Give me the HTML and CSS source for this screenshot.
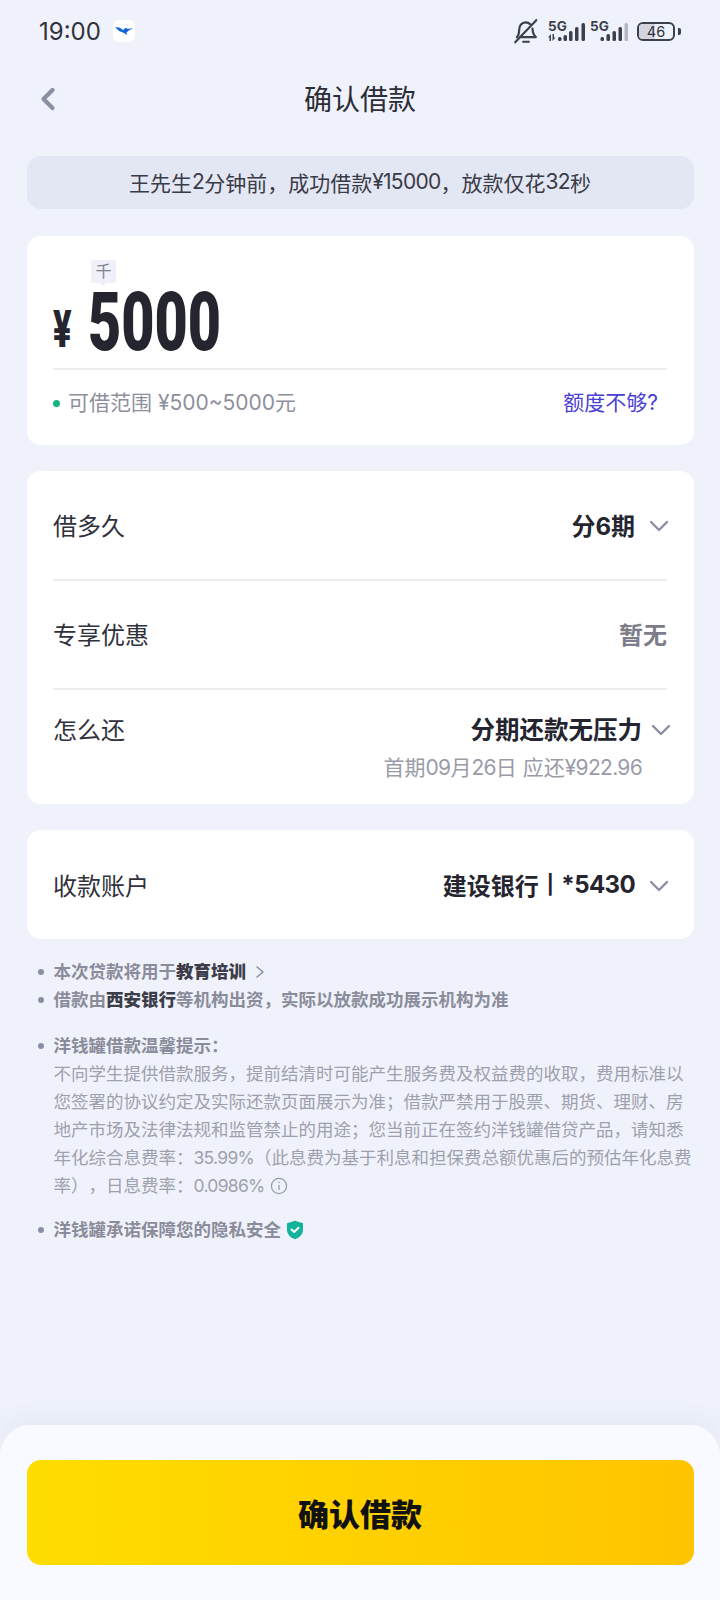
FILE: index.html
```html
<!doctype html>
<html lang="zh-CN">
<head>
<meta charset="utf-8">
<meta name="viewport" content="width=device-width, initial-scale=1.0">
<link rel="stylesheet" href="styles.css">
<title>确认借款</title>
</head>
<body>
<main class="page">
  <div class="status">
    <div class="status-left">
      <span class="time">19:00</span>
      <span class="app-badge">
        <svg width="20" height="12" viewBox="0 0 20 12"><path d="M1 2l5 .8 3 2.200 2-1.700 1.500-.3 1.300 1L19 3l-4.500 2.800-2 1.700.5 2.500-3.500-2.300L5 6z" fill="#1463d8"/></svg>
      </span>
    </div>
    <div class="status-right">
      <svg class="bell" width="24" height="25" viewBox="2 1 21 22" fill="none" stroke="#3c3f4c" stroke-width="1.900" stroke-linecap="round" stroke-linejoin="round"><path d="M4.500 17c1.500-1.500 2-3.500 2-6.500 0-3.600 2.200-6.500 5.700-6.500 1.700 0 3 .6 4 1.700"/><path d="M18.200 9.500c.2 3 .5 5.500 3 7.500H8"/><path d="M3 21.500L21.500 2"/><path d="M10 21h5"/></svg>
      <span class="net">
        <span class="net-label">5G</span>
        <svg width="38" height="21" viewBox="0 0 38 21" fill="#3c3f4c"><path d="M0 16.500L3 13v7H1.500v-3.500zM4.500 13H6v3.500h1.500L4.500 20z"/><rect x="10" y="16" width="3.500" height="4" rx="1.500"/><rect x="15.500" y="14" width="3.500" height="6" rx="1.500"/><rect x="21" y="10" width="3.500" height="10" rx="1.500"/><rect x="27" y="6" width="3.500" height="14" rx="1.500"/><rect x="33.500" y="2" width="3.500" height="18" rx="1.500"/></svg>
      </span>
      <span class="net">
        <span class="net-label">5G</span>
        <svg width="38" height="21" viewBox="0 0 38 21" fill="#3c3f4c"><rect x="10.500" y="16" width="3.500" height="4" rx="1.500"/><rect x="16.500" y="13" width="3.500" height="7" rx="1.500"/><rect x="22.500" y="10" width="3.500" height="10" rx="1.500"/><rect x="28.500" y="6" width="3.500" height="14" rx="1.500"/><rect x="34.500" y="2" width="3.500" height="18" rx="1.500" fill="#b5b7c0"/></svg>
      </span>
      <span class="battery"><span class="battery-level"></span><span class="battery-num">46</span></span>
      <span class="battery-cap"></span>
    </div>
  </div>

  <header class="nav">
    <svg class="nav-back" width="16" height="24" viewBox="0 0 16 24" fill="none" stroke="#8b8ea3" stroke-width="4.200" stroke-linejoin="round" stroke-linecap="round"><path d="M12.500 3L3.500 12l9 9"/></svg>
    <h1 class="nav-title">确认借款</h1>
  </header>

  <div class="notice">王先生<span class="num">2</span>分钟前，成功借款<span class="num">¥15000</span>，放款仅花<span class="num">32</span>秒</div>

  <section class="card amount-card">
    <div class="amount-hint">千</div>
    <div class="amount">
      <span class="yen">¥</span>
      <span class="amount-num">5000</span>
    </div>
    <div class="range">
      <span class="range-text"><i class="dot"></i>可借范围 ¥500~5000元</span>
      <span class="range-link">额度不够?</span>
    </div>
  </section>

  <section class="card rows">
    <div class="row row-first">
      <span class="row-label">借多久</span>
      <span class="row-value">分6期<svg class="chev" width="20" height="12" viewBox="0 0 20 12" fill="none" stroke="#8b8ea3" stroke-width="2.400" stroke-linecap="round" stroke-linejoin="round"><path d="M2 2l8 8 8-8"/></svg></span>
    </div>
    <div class="row row-second">
      <span class="row-label">专享优惠</span>
      <span class="row-value row-muted">暂无</span>
    </div>
    <div class="row row-third">
      <div class="row-top">
        <span class="row-label">怎么还</span>
        <span class="row-value row-wide">分期还款无压力<svg class="chev chev-tight" width="20" height="12" viewBox="0 0 20 12" fill="none" stroke="#8b8ea3" stroke-width="2.400" stroke-linecap="round" stroke-linejoin="round"><path d="M2 2l8 8 8-8"/></svg></span>
      </div>
      <div class="row-sub">首期<span class="num">09</span>月<span class="num">26</span>日 应还<span class="num">¥922.96</span></div>
    </div>
  </section>

  <section class="card account">
    <span class="row-label">收款账户</span>
    <span class="row-value">建设银行<span class="bank-no"><span class="bank-sep">|</span>*5430</span><svg class="chev" width="20" height="12" viewBox="0 0 20 12" fill="none" stroke="#8b8ea3" stroke-width="2.400" stroke-linecap="round" stroke-linejoin="round"><path d="M2 2l8 8 8-8"/></svg></span>
  </section>

  <section class="notes">
    <p class="note note-strong">本次贷款将用于<b>教育培训</b><svg class="note-arrow" width="10" height="14" viewBox="0 0 10 14" fill="none" stroke="#8b8ea3" stroke-width="1.600" stroke-linecap="round" stroke-linejoin="round"><path d="M2 2l6 5-6 5"/></svg></p>
    <p class="note note-strong">借款由<b>西安银行</b>等机构出资，实际以放款成功展示机构为准</p>
    <p class="note note-strong note-gap">洋钱罐借款温馨提示：</p>
    <div class="note-body">
      <p>不向学生提供借款服务，提前结清时可能产生服务费及权益费的收取，费用标准以</p>
      <p>您签署的协议约定及实际还款页面展示为准；借款严禁用于股票、期货、理财、房</p>
      <p>地产市场及法律法规和监管禁止的用途；您当前正在签约洋钱罐借贷产品，请知悉</p>
      <p>年化综合息费率：<span class="num">35.99%</span>（此息费为基于利息和担保费总额优惠后的预估年化息费</p>
      <p>率），日息费率：<span class="num">0.0986%</span><svg class="info" width="18" height="18" viewBox="0 0 18 18" fill="none" stroke="#9a9dad" stroke-width="1.300"><circle cx="9" cy="9" r="7.600"/><path d="M9 8v5M9 4.800v1.300"/></svg></p>
    </div>
    <p class="note note-strong note-last">洋钱罐承诺保障您的隐私安全<svg class="shield" width="18" height="20" viewBox="0 0 18 20"><path d="M9 .8l8 2.400v6.300c0 4.800-3.300 8-8 9.700-4.700-1.700-8-4.900-8-9.700V3.200z" fill="#12b39a"/><path d="M5.500 9.500L8.200 12l4.300-4.200" fill="none" stroke="#fff" stroke-width="2" stroke-linecap="round" stroke-linejoin="round"/></svg></p>
  </section>
</main>

<footer class="footer">
  <button class="submit">确认借款</button>
</footer>
</body>
</html>
```

FILE: styles.css
```css
* {
    box-sizing: border-box;
}
html,
body {
    margin: 0;
    padding: 0;
}
body {
    width: 720px;
    height: 1600px;
    overflow: hidden;
    display: flex;
    flex-direction: column;
    font-family: Inter, "Noto Sans CJK SC", sans-serif;
    color: #24252f;
    background-color: #eff2fa;
}
p,
h1 {
    margin: 0;
    padding: 0;
}

.page {
    flex: 1;
    padding: 0 26.5px;
}
.num {
    letter-spacing: -0.7px;
}

/* status bar */
.status {
    height: 62px;
    margin: 0 -26.5px;
    padding: 0 39px;
    display: flex;
    align-items: center;
    justify-content: space-between;
}
.status-left {
    display: flex;
    align-items: center;
    gap: 12px;
}
.time {
    font-size: 24px;
    color: #30323c;
}
.app-badge {
    width: 22px;
    height: 22px;
    border-radius: 6px;
    background: #fff;
    display: flex;
    align-items: center;
    justify-content: center;
}
.status-right {
    display: flex;
    align-items: center;
}
.bell {
    margin-right: 10px;
}
.net {
    position: relative;
    display: flex;
    width: 38px;
    height: 21px;
    margin-right: 4px;
}
.net-label {
    position: absolute;
    left: 0;
    top: -2px;
    font-size: 13.5px;
    font-weight: 700;
    line-height: 14px;
    color: #3c3f4c;
}
.battery {
    position: relative;
    width: 38px;
    height: 19px;
    margin-left: 5px;
    border: 2px solid #3c3f4c;
    border-radius: 6px;
    overflow: hidden;
    display: flex;
    align-items: center;
    justify-content: center;
}
.battery-level {
    position: absolute;
    left: 0;
    top: 0;
    bottom: 0;
    width: 46%;
    background: #d3d5de;
}
.battery-num {
    position: relative;
    font-size: 14.5px;
    line-height: 15px;
    color: #30323c;
}
.battery-cap {
    width: 3px;
    height: 7px;
    margin-left: 3px;
    background: #3c3f4c;
    border-radius: 0 2px 2px 0;
}

/* nav */
.nav {
    height: 74px;
    padding-bottom: 2px;
    display: flex;
    align-items: center;
    justify-content: center;
    position: relative;
}
.nav-back {
    position: absolute;
    left: 13px;
    top: 25px;
}
.nav-title {
    font-size: 28px;
    font-weight: 400;
    color: #2c2d37;
}

.notice {
    margin-top: 20px;
    height: 53px;
    padding-bottom: 2px;
    border-radius: 14px;
    background: #e3e6f3;
    display: flex;
    align-items: center;
    justify-content: center;
    font-size: 21px;
    color: #3a3b47;
}

.card {
    background: #fff;
    border-radius: 14px;
    padding: 0 26.5px;
}

/* amount */
.amount-card {
    margin-top: 27px;
    height: 209px;
    padding-top: 24px;
}
.amount-hint {
    width: 25px;
    height: 23px;
    margin-left: 38px;
    position: relative;
    background: #eff0f9;
    border-radius: 2px;
    font-size: 16px;
    line-height: 23px;
    text-align: center;
    color: #80818f;
}
.amount-hint:after {
    content: "";
    position: absolute;
    left: 9px;
    top: 23px;
    border: 3px solid transparent;
    border-top-color: #eff0f9;
}
.amount {
    height: 87px;
    padding-bottom: 8px;
    display: flex;
    align-items: center;
    border-bottom: 2px solid #ecedf1;
}
.yen {
    font-family: Roboto, sans-serif;
    font-weight: 900;
    font-size: 52px;
    line-height: 52px;
    margin-top: 16px;
    width: 35px;
    transform: scaleX(0.66);
    transform-origin: left center;
    color: #24252f;
}
.amount-num {
    font-family: Roboto, sans-serif;
    font-weight: 900;
    font-size: 82px;
    line-height: 70px;
    transform: scaleX(0.7);
    transform-origin: left center;
    color: #24252f;
}
.range {
    display: flex;
    align-items: center;
    justify-content: space-between;
    margin-top: 18px;
    font-size: 21px;
    line-height: 30px;
}
.range-text {
    color: #8e8f9d;
    display: flex;
    align-items: center;
    white-space: pre;
}
.dot {
    width: 7px;
    height: 7px;
    border-radius: 50%;
    background: #13b77c;
    margin-right: 8px;
}
.range-link {
    font-size: 21px;
    color: #4a3fd2;
    margin-right: 9px;
}

/* rows */
.rows {
    margin-top: 26px;
    height: 333px;
}
.row {
    display: flex;
    align-items: center;
    justify-content: space-between;
}
.row-first {
    height: 110px;
    padding-bottom: 2px;
    border-bottom: 2px solid #ecedf1;
}
.row-second {
    height: 109px;
    padding-bottom: 2px;
    border-bottom: 2px solid #ecedf1;
}
.row-third {
    display: block;
    padding-top: 21px;
}
.row-top {
    display: flex;
    align-items: center;
    justify-content: space-between;
}
.row-label {
    font-size: 24px;
    color: #30313c;
}
.row-value {
    font-size: 24px;
    font-weight: 700;
    color: #24252f;
    display: flex;
    align-items: center;
}
.row-muted {
    color: #7c7d88;
}
.row-wide {
    font-size: 24.5px;
}
.chev {
    margin: 3px -2px 0 14px;
}
.chev-tight {
    margin-left: 9px;
    margin-right: -4px;
}
.row-sub {
    margin-top: 5px;
    padding-right: 25px;
    text-align: right;
    font-size: 21px;
    color: #9a9ba8;
}

.account {
    margin-top: 26px;
    height: 109px;
    display: flex;
    align-items: center;
    justify-content: space-between;
}
.bank-no {
    display: flex;
    align-items: center;
    letter-spacing: -0.6px;
}
.bank-sep {
    font-size: 19px;
    font-weight: 700;
    margin: 0 8px 0 8px;
}

/* notes */
.notes {
    margin-top: 19px;
    padding: 0 0 0 27px;
    font-size: 17.5px;
    line-height: 28px;
}
.note {
    position: relative;
}
.note:before {
    content: "";
    position: absolute;
    left: -16px;
    top: 11px;
    width: 6px;
    height: 6px;
    border-radius: 50%;
    background: #8b8ea3;
}
.note-strong {
    font-weight: 700;
    color: #8b8c9b;
}
.note-strong b {
    color: #3c3d48;
}
.note-gap {
    margin-top: 18px;
}
.note-last {
    margin-top: 16px;
}
.note-body {
    color: #9fa0ae;
    white-space: nowrap;
    text-spacing-trim: space-all;
}
.note-arrow {
    margin-left: 9px;
    vertical-align: -1px;
}
.info {
    margin-left: 5px;
    vertical-align: -3px;
}
.shield {
    margin-left: 5px;
    vertical-align: -4px;
}

/* bottom */
.footer {
    height: 175px;
    flex: none;
    padding: 35px 26.5px 0;
    background: #f9faff;
    border-radius: 30px 30px 0 0;
    box-shadow: 0 -6px 24px rgba(90, 100, 140, 0.07);
}
.submit {
    display: block;
    width: 100%;
    height: 105px;
    border: 0;
    border-radius: 14px;
    background: linear-gradient(90deg, #ffdd00, #ffc400);
    font-family: Inter, "Noto Sans CJK SC", sans-serif;
    font-size: 31px;
    font-weight: 900;
    color: #111;
}
```
